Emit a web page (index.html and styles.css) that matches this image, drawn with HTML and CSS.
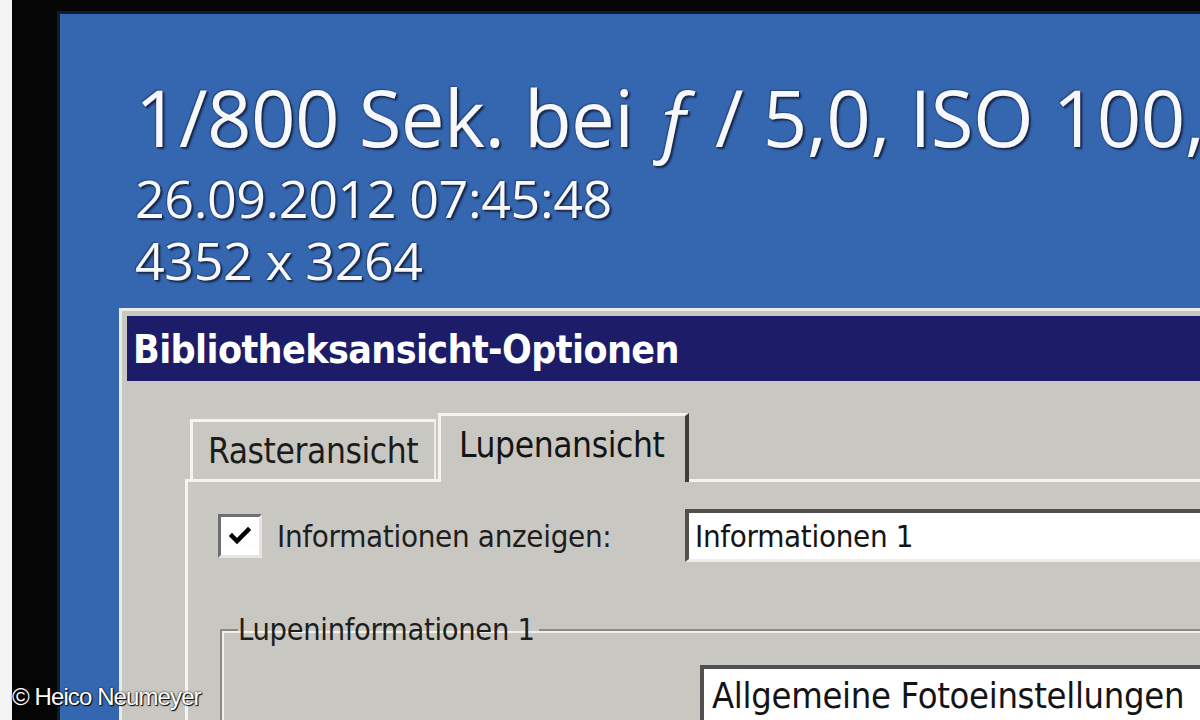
FILE: index.html
```html
<!DOCTYPE html>
<html lang="de">
<head>
<meta charset="utf-8">
<title>Bibliotheksansicht-Optionen</title>
<link rel="stylesheet" href="styles.css">
</head>
<body>
<div class="page">
  <div class="strip"></div>
  <div class="frame">
    <div class="screen">
      <div class="info">
        <div class="exp">1/800 Sek. bei <span class="fn">ƒ</span> / 5,0, ISO 100,</div>
        <div class="line first">26.09.2012 07:45:48</div>
        <div class="line">4352 x 3264</div>
      </div>
      <div class="dialog">
        <div class="titlebar">Bibliotheksansicht-Optionen</div>
        <div class="body">
          <div class="tabs">
            <div class="tab">Rasteransicht</div>
            <div class="tab active">Lupenansicht</div>
          </div>
          <div class="panel">
            <div class="row">
              <div class="check">
                <span class="box">
                  <svg width="22" height="20" viewBox="0 0 22 20"><path d="M3 10 L8 15 L19 4" fill="none" stroke="#000" stroke-width="4.5" stroke-linecap="square"/></svg>
                </span>
                <span class="lbl">Informationen anzeigen:</span>
              </div>
              <div class="field">Informationen 1</div>
            </div>
            <fieldset class="group">
              <legend>Lupeninformationen 1</legend>
              <div class="field f2">Allgemeine Fotoeinstellungen</div>
            </fieldset>
          </div>
        </div>
      </div>
    </div>
  </div>
  <div class="credit">© Heico Neumeyer</div>
</div>
</body>
</html>
```

FILE: styles.css
```css
html, body {
  margin: 0;
  padding: 0;
  background: #ffffff;
}

.page {
  position: relative;
  display: flex;
  width: 1200px;
  height: 720px;
  overflow: hidden;
  background: #ffffff;
}

.strip {
  width: 12px;
  flex: none;
  background: #f4f4f4;
}

.frame {
  flex: 1;
  display: flex;
  background: #050505;
  padding: 11px 0 0 45px;
  min-width: 0;
}

.screen {
  flex: 1;
  min-width: 0;
  background: #3566b0;
  border-top: 3px solid #141c2c;
  border-left: 3px solid #141c2c;
  padding-left: 59px;
  overflow: hidden;
}

.info {
  padding-left: 16px;
  padding-top: 63px;
  color: #f6f8fb;
  font-family: "Open Sans", "Noto Sans", sans-serif;
  white-space: nowrap;
  text-shadow: 1px 1px 0 #1d2c4e, 2px 2px 2px rgba(10, 20, 40, 0.75), -1px -1px 1px rgba(20, 40, 80, 0.5);
}

.exp {
  font-size: 78px;
  line-height: 80px;
  letter-spacing: -0.6px;
}

.fn {
  font-style: italic;
}

.line {
  font-size: 52px;
  line-height: 62px;
  letter-spacing: -0.4px;
}

.line.first {
  margin-top: 10px;
}

.dialog {
  margin-top: 17px;
  width: 1200px;
  height: 500px;
  background: #c9c7c1;
  border-top: 3px solid #eceae6;
  border-left: 3px solid #eceae6;
  padding: 5px 0 0 5px;
  font-family: "DejaVu Sans Condensed", "DejaVu Sans", sans-serif;
}

.titlebar {
  height: 65px;
  background: #1c1c68;
  color: #ffffff;
  font-weight: bold;
  font-size: 39px;
  line-height: 67px;
  padding-left: 6px;
  letter-spacing: -0.6px;
}

.body {
  padding: 32px 0 0 58px;
}

.tabs {
  display: flex;
  align-items: flex-end;
  padding-left: 5px;
  position: relative;
  z-index: 1;
}

.tab {
  height: 60px;
  width: 246px;
  box-sizing: border-box;
  border-top: 3px solid #f4f3f0;
  border-left: 3px solid #f4f3f0;
  border-right: 2px solid #eeede9;
  padding-left: 15px;
  font-size: 35px;
  line-height: 58px;
  color: #1c1c1c;
  letter-spacing: -0.4px;
}

.tab.active {
  height: 69px;
  width: 251px;
  margin-left: 2px;
  margin-bottom: -3px;
  padding-left: 18px;
  line-height: 58px;
  border-right: 4px solid #3c3c3e;
  background: #c9c7c1;
  color: #141414;
}

.panel {
  border-top: 3px solid #f4f3f0;
  border-left: 3px solid #f4f3f0;
  height: 400px;
  padding: 27px 0 0 30px;
}

.row {
  display: flex;
  align-items: center;
}

.check {
  width: 467px;
  display: flex;
  align-items: center;
}

.box {
  width: 44px;
  height: 44px;
  box-sizing: border-box;
  background: #ffffff;
  border-top: 3px solid #6e6e6e;
  border-left: 3px solid #6e6e6e;
  border-right: 3px solid #e6e5e1;
  border-bottom: 3px solid #e6e5e1;
  display: flex;
  align-items: center;
  justify-content: center;
}

.lbl {
  margin-left: 15px;
  font-size: 31px;
  color: #1e1e1e;
  letter-spacing: -0.3px;
}

.field {
  flex: 1;
  height: 53px;
  box-sizing: border-box;
  background: #ffffff;
  border-top: 4px solid #505050;
  border-left: 4px solid #505050;
  border-bottom: 3px solid #eeede9;
  padding-left: 6px;
  font-size: 31px;
  line-height: 46px;
  color: #141414;
  letter-spacing: -0.3px;
}

.group {
  margin: 50px 0 0 2px;
  padding: 18px 0 0 0;
  border: 0;
  border-top: 2px solid #8a8986;
  border-left: 2px solid #8a8986;
  box-shadow: inset 2px 2px 0 #f2f1ee;
  min-height: 200px;
}

.group legend {
  margin-left: 16px;
  padding: 0 4px 0 0;
  font-size: 30.5px;
  color: #1e1e1e;
  letter-spacing: -0.3px;
}

.f2 {
  margin-left: 478px;
  height: 62px;
  font-size: 36px;
  line-height: 54px;
  padding-left: 8px;
}

.credit {
  position: absolute;
  left: 12px;
  bottom: 9px;
  font-family: "Liberation Sans", Arial, sans-serif;
  font-size: 24px;
  letter-spacing: -0.9px;
  color: #ffffff;
  text-shadow: 1px 1px 1px #000, 0 0 2px #000;
}
```
